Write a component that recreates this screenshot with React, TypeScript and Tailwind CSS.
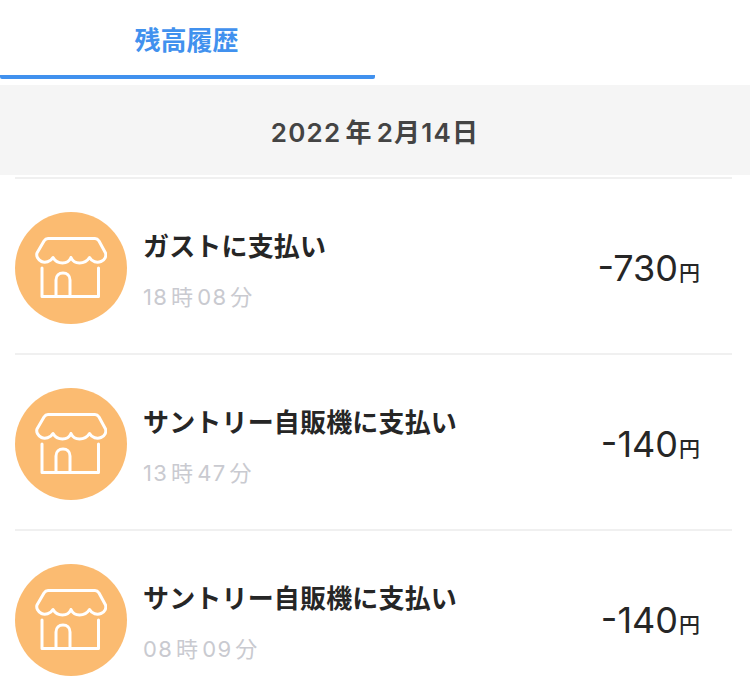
import React from 'react';

const jpFont = "font-['Inter','Noto_Sans_CJK_JP',sans-serif]";

const items = [
    { title: 'ガストに支払い', time: ['18', '時', '08', '分'], amount: '-730' },
    { title: 'サントリー自販機に支払い', time: ['13', '時', '47', '分'], amount: '-140' },
    { title: 'サントリー自販機に支払い', time: ['08', '時', '09', '分'], amount: '-140' },
];

function ShopIcon() {
    return (
        <svg width="72" height="64" viewBox="0 0 72 64" fill="none" stroke="white" strokeWidth="3" strokeLinejoin="round" strokeLinecap="round">
            {/* awning */}
            <path d="M13 2.500H60C62 2.500 63 3.500 64 5L70.500 17C71.500 20 70 24 66 25.500C62 27 57 26 54.500 21.500C52 25.500 48 27 44.500 27C41 27 37.500 25 36 21.500C34.500 25 31 27 27.500 27C24 27 20 25 18 21.500C15.500 26 10 27 6.500 25.500C3 24 1 20 2 17L9 5C10 3.500 11 2.500 13 2.500Z" />
            {/* walls */}
            <path d="M7 32V60.500H63.500V32" />
            {/* door */}
            <path d="M21 60V44C21 39.500 24 37 28 37C32 37 35 39.500 35 44V60" />
        </svg>
    );
}

function Row({ title, time, amount }: { title: string; time: string[]; amount: string }) {
    return (
        <div className="h-[176px] pt-[4px] flex items-center border-b-2 border-[#f0f0f0] mr-[18px]">
            <div className="w-[112px] h-[112px] rounded-full bg-[#fbbb71] flex items-center justify-center shrink-0">
                <ShopIcon />
            </div>
            <div className="ml-[16px] mt-[4px] flex-1">
                <div className="text-[26px] leading-[36px] font-bold text-[#262626] tracking-[0.17px]">{title}</div>
                <div className="mt-[17px] text-[22px] leading-[30px] text-[#c9cad0] tracking-[1.25px] flex gap-[3px]">
                    {time.map((t, i) => <span key={i}>{t}</span>)}
                </div>
            </div>
            <div className="mr-[32px] flex items-baseline text-[#262626]">
                <span className="text-[36px] leading-[44px]">{amount}</span>
                <span className="text-[21px] ml-[1px] font-medium -translate-y-px">円</span>
            </div>
        </div>
    );
}

export default function App() {
    return (
        <div className={`w-[750px] h-[696px] bg-white overflow-hidden ${jpFont}`}>
            {/* Tabs */}
            <div className="h-[85px] relative">
                <div className="w-[375px] h-[79px] border-b-4 border-[#4191ee] rounded-b-[2px] flex items-center justify-center text-[26px] font-bold text-[#4191ee] pt-[6px] pr-[2px]">
                    残高履歴
                </div>
            </div>

            {/* Date header */}
            <div className="h-[90px] bg-[#f5f5f5] flex items-center justify-center text-[26px] font-semibold text-[#444444] tracking-[1.2px] pt-[4px]">
                <span>2022</span><span className="mx-[4px]">年</span><span>2月14日</span>
            </div>

            {/* List */}
            <div className="pl-[15px]">
                <div className="h-[4px] border-b-2 border-[#f0f0f0] mr-[18px]" />
                {items.map((item, i) => (
                    <Row key={i} {...item} />
                ))}
            </div>
        </div>
    );
}
